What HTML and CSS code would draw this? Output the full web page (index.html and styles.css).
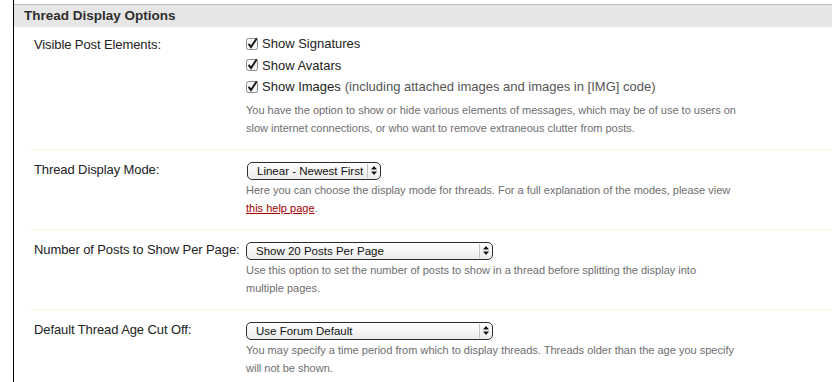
FILE: index.html
```html
<!DOCTYPE html>
<html lang="en">
<head>
  <meta charset="UTF-8">
  <title>Thread Display Options</title>
  <link rel="stylesheet" href="styles.css">
</head>
<body>

<div class="panel">
  <h2 class="panel-head">Thread Display Options</h2>

  <div class="row">
    <div class="label">Visible Post Elements:</div>
    <div class="field">
      <ul class="options">
        <li><svg class="check" width="14" height="14" viewBox="0 0 14 14"><rect x="0.5" y="1.5" width="11" height="11" rx="2" fill="#f6f6f6" stroke="#8c8c8c"/><path d="M2.6 6.8 L5 10 L10.8 1.2" fill="none" stroke="#1a1a1a" stroke-width="2"/></svg>Show Signatures</li>
        <li><svg class="check" width="14" height="14" viewBox="0 0 14 14"><rect x="0.5" y="1.5" width="11" height="11" rx="2" fill="#f6f6f6" stroke="#8c8c8c"/><path d="M2.6 6.8 L5 10 L10.8 1.2" fill="none" stroke="#1a1a1a" stroke-width="2"/></svg>Show Avatars</li>
        <li><svg class="check" width="14" height="14" viewBox="0 0 14 14"><rect x="0.5" y="1.5" width="11" height="11" rx="2" fill="#f6f6f6" stroke="#8c8c8c"/><path d="M2.6 6.8 L5 10 L10.8 1.2" fill="none" stroke="#1a1a1a" stroke-width="2"/></svg>Show Images <span class="note">(including attached images and images in [IMG] code)</span></li>
      </ul>
      <p class="desc">You have the option to show or hide various elements of messages, which may be of use to users on slow internet connections, or who want to remove extraneous clutter from posts.</p>
    </div>
  </div>

  <div class="row">
    <div class="label">Thread Display Mode:</div>
    <div class="field">
      <div class="select small">
        <span class="select-text">Linear - Newest First</span>
        <span class="arrows"><svg width="6" height="9" viewBox="0 0 6 9"><path d="M0 3.5 L3 0 L6 3.5 Z M0 5.5 L3 9 L6 5.5 Z" fill="#111"/></svg></span>
      </div>
      <p class="desc">Here you can choose the display mode for threads. For a full explanation of the modes, please view <a href="#">this help page</a>.</p>
    </div>
  </div>

  <div class="row">
    <div class="label">Number of Posts to Show Per Page:</div>
    <div class="field">
      <div class="select">
        <span class="select-text">Show 20 Posts Per Page</span>
        <span class="arrows"><svg width="6" height="9" viewBox="0 0 6 9"><path d="M0 3.5 L3 0 L6 3.5 Z M0 5.5 L3 9 L6 5.5 Z" fill="#111"/></svg></span>
      </div>
      <p class="desc">Use this option to set the number of posts to show in a thread before splitting the display into<br>multiple pages.</p>
    </div>
  </div>

  <div class="row">
    <div class="label">Default Thread Age Cut Off:</div>
    <div class="field">
      <div class="select">
        <span class="select-text">Use Forum Default</span>
        <span class="arrows"><svg width="6" height="9" viewBox="0 0 6 9"><path d="M0 3.5 L3 0 L6 3.5 Z M0 5.5 L3 9 L6 5.5 Z" fill="#111"/></svg></span>
      </div>
      <p class="desc">You may specify a time period from which to display threads. Threads older than the age you specify will not be shown.</p>
    </div>
  </div>
</div>

</body>
</html>
```

FILE: styles.css
```css
body {
  margin: 0;
  font-family: "Liberation Sans", Arial, sans-serif;
  color: #222;
  background: #fff;
}
.panel {
  margin-left: 13px;
  padding-top: 4px;
  border-left: 1px solid #000;
  min-height: 378px;
}
.panel-head {
  margin: 0;
  height: 22px;
  line-height: 22px;
  padding-left: 10px;
  border-top: 1px solid #bdbdbd;
  background-color: #e6e6e6;
  font-size: 13.5px;
  font-weight: bold;
  color: #2e2e2e;
}
.row {
  display: flex;
  margin-left: 15px;
  padding: 8px 0 12px;
  border-bottom: 1px solid #f7f7df;
}
.row:last-child {
  border-bottom: none;
}
.label {
  width: 212px;
  padding: 4px 0 0 5px;
  font-size: 13px;
  line-height: 16px;
  letter-spacing: -0.1px;
}
.panel-head + .row .label {
  padding-top: 2px;
}
.field {
  flex: 1;
}
.options {
  list-style: none;
  margin: -2px 0 3px;
  padding: 0;
  font-size: 13px;
  line-height: 21.5px;
}
.options li {
  display: flex;
  align-items: center;
}
.check {
  margin-right: 2px;
  flex-shrink: 0;
}
.note {
  color: #555;
  margin-left: 4px;
}
.desc {
  margin: 1px 0 0;
  width: 500px;
  font-size: 11px;
  line-height: 18px;
  color: #6e6e6e;
}
.desc a {
  color: #a00000;
}
.select {
  display: flex;
  align-items: center;
  width: 245px;
  height: 16px;
  margin: 4px 0 0;
  border: 1px solid #2b2b2b;
  border-radius: 5px;
  background: linear-gradient(#ffffff, #ececec);
  font-size: 11.5px;
  color: #111;
}
.select.small {
  width: 132px;
  margin-left: 1px;
}
.select-text {
  flex: 1;
  padding-left: 9px;
  white-space: nowrap;
}
.arrows {
  display: flex;
  align-items: center;
  justify-content: center;
  width: 12px;
  height: 14px;
  border-left: 1px solid #c4c4c4;
}
```
